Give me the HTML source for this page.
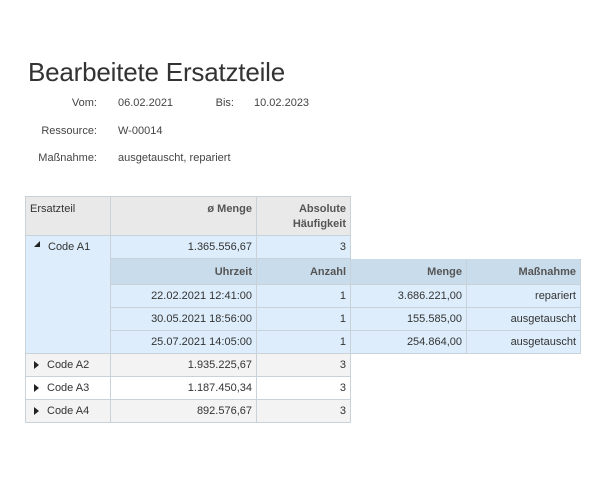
<!DOCTYPE html>
<html><head><meta charset="utf-8"><style>
body{margin:0;width:607px;height:486px;background:#fff;font-family:"Liberation Sans",sans-serif;color:#333;position:relative;overflow:hidden}
.a{position:absolute;white-space:nowrap}
h1{position:absolute;left:28px;top:57px;margin:0;font-weight:normal;font-size:26px;color:#333;letter-spacing:-0.2px}
.l{font-size:11px;color:#444}
.c{position:absolute;box-sizing:border-box;font-size:11px;padding:0 4px;display:flex;align-items:center;justify-content:flex-end;border-right:1px solid #c9d1d9;border-bottom:1px solid #c9d1d9}
.h{background:#e9e9e9;font-weight:bold;color:#555}
.b{background:#ddedfb}
.s{background:#c9dceb;font-weight:bold;color:#555}
.g{background:#f3f3f3}
.w{background:#fff}
.tri{display:inline-block;width:0;height:0;border-top:4px solid transparent;border-bottom:4px solid transparent;border-left:5px solid #222;margin:0 8px 0 4px}
</style></head><body>
<h1>Bearbeitete Ersatzteile</h1>
<div class="a l" style="right:510px;top:97px">Vom:</div>
<div class="a l" style="left:118px;top:97px">06.02.2021</div>
<div class="a l" style="right:373px;top:97px">Bis:</div>
<div class="a l" style="left:254px;top:97px">10.02.2023</div>
<div class="a l" style="right:510px;top:125px">Ressource:</div>
<div class="a l" style="left:118px;top:125px">W-00014</div>
<div class="a l" style="right:510px;top:152px">Maßnahme:</div>
<div class="a l" style="left:118px;top:152px">ausgetauscht, repariert</div>

<div style="position:absolute;left:25px;top:196px;width:1px;height:227px;background:#c9d1d9"></div>
<div style="position:absolute;left:25px;top:196px;width:326px;height:1px;background:#c9d1d9"></div>
<div class="c h" style="left:26px;top:197px;width:85px;height:39px;justify-content:flex-start;align-items:flex-start;padding-top:6px;font-weight:normal;color:#333">Ersatzteil</div>
<div class="c h" style="left:111px;top:197px;width:146px;height:39px;align-items:flex-start;padding-top:6px">ø Menge</div>
<div class="c h" style="left:257px;top:197px;width:94px;height:39px;text-align:right;line-height:15px;align-items:flex-start;padding-top:5px">Absolute<br>Häufigkeit</div>

<div class="c b" style="left:26px;top:236px;width:85px;height:118px;justify-content:flex-start;align-items:flex-start;padding-top:5px"><span class="tri" style="border:none;width:0;height:0;border-left:6px solid transparent;border-bottom:6px solid #222;margin:0 8px 0 4px"></span>Code A1</div>
<div class="c b" style="left:111px;top:236px;width:146px;height:23px">1.365.556,67</div>
<div class="c b" style="left:257px;top:236px;width:94px;height:23px">3</div>

<div class="c s" style="left:111px;top:259px;width:146px;height:26px">Uhrzeit</div>
<div class="c s" style="left:257px;top:259px;width:94px;height:26px">Anzahl</div>
<div class="c s" style="left:351px;top:259px;width:116px;height:26px">Menge</div>
<div class="c s" style="left:467px;top:259px;width:114px;height:26px">Maßnahme</div>

<div class="c b" style="left:111px;top:285px;width:146px;height:23px">22.02.2021 12:41:00</div>
<div class="c b" style="left:257px;top:285px;width:94px;height:23px">1</div>
<div class="c b" style="left:351px;top:285px;width:116px;height:23px">3.686.221,00</div>
<div class="c b" style="left:467px;top:285px;width:114px;height:23px">repariert</div>
<div class="c b" style="left:111px;top:308px;width:146px;height:23px">30.05.2021 18:56:00</div>
<div class="c b" style="left:257px;top:308px;width:94px;height:23px">1</div>
<div class="c b" style="left:351px;top:308px;width:116px;height:23px">155.585,00</div>
<div class="c b" style="left:467px;top:308px;width:114px;height:23px">ausgetauscht</div>
<div class="c b" style="left:111px;top:331px;width:146px;height:23px">25.07.2021 14:05:00</div>
<div class="c b" style="left:257px;top:331px;width:94px;height:23px">1</div>
<div class="c b" style="left:351px;top:331px;width:116px;height:23px">254.864,00</div>
<div class="c b" style="left:467px;top:331px;width:114px;height:23px">ausgetauscht</div>

<div class="c g" style="left:26px;top:354px;width:85px;height:23px;justify-content:flex-start"><span class="tri"></span>Code A2</div>
<div class="c g" style="left:111px;top:354px;width:146px;height:23px">1.935.225,67</div>
<div class="c g" style="left:257px;top:354px;width:94px;height:23px">3</div>
<div class="c w" style="left:26px;top:377px;width:85px;height:23px;justify-content:flex-start"><span class="tri"></span>Code A3</div>
<div class="c w" style="left:111px;top:377px;width:146px;height:23px">1.187.450,34</div>
<div class="c w" style="left:257px;top:377px;width:94px;height:23px">3</div>
<div class="c g" style="left:26px;top:400px;width:85px;height:23px;justify-content:flex-start"><span class="tri"></span>Code A4</div>
<div class="c g" style="left:111px;top:400px;width:146px;height:23px">892.576,67</div>
<div class="c g" style="left:257px;top:400px;width:94px;height:23px">3</div>
</body></html>
